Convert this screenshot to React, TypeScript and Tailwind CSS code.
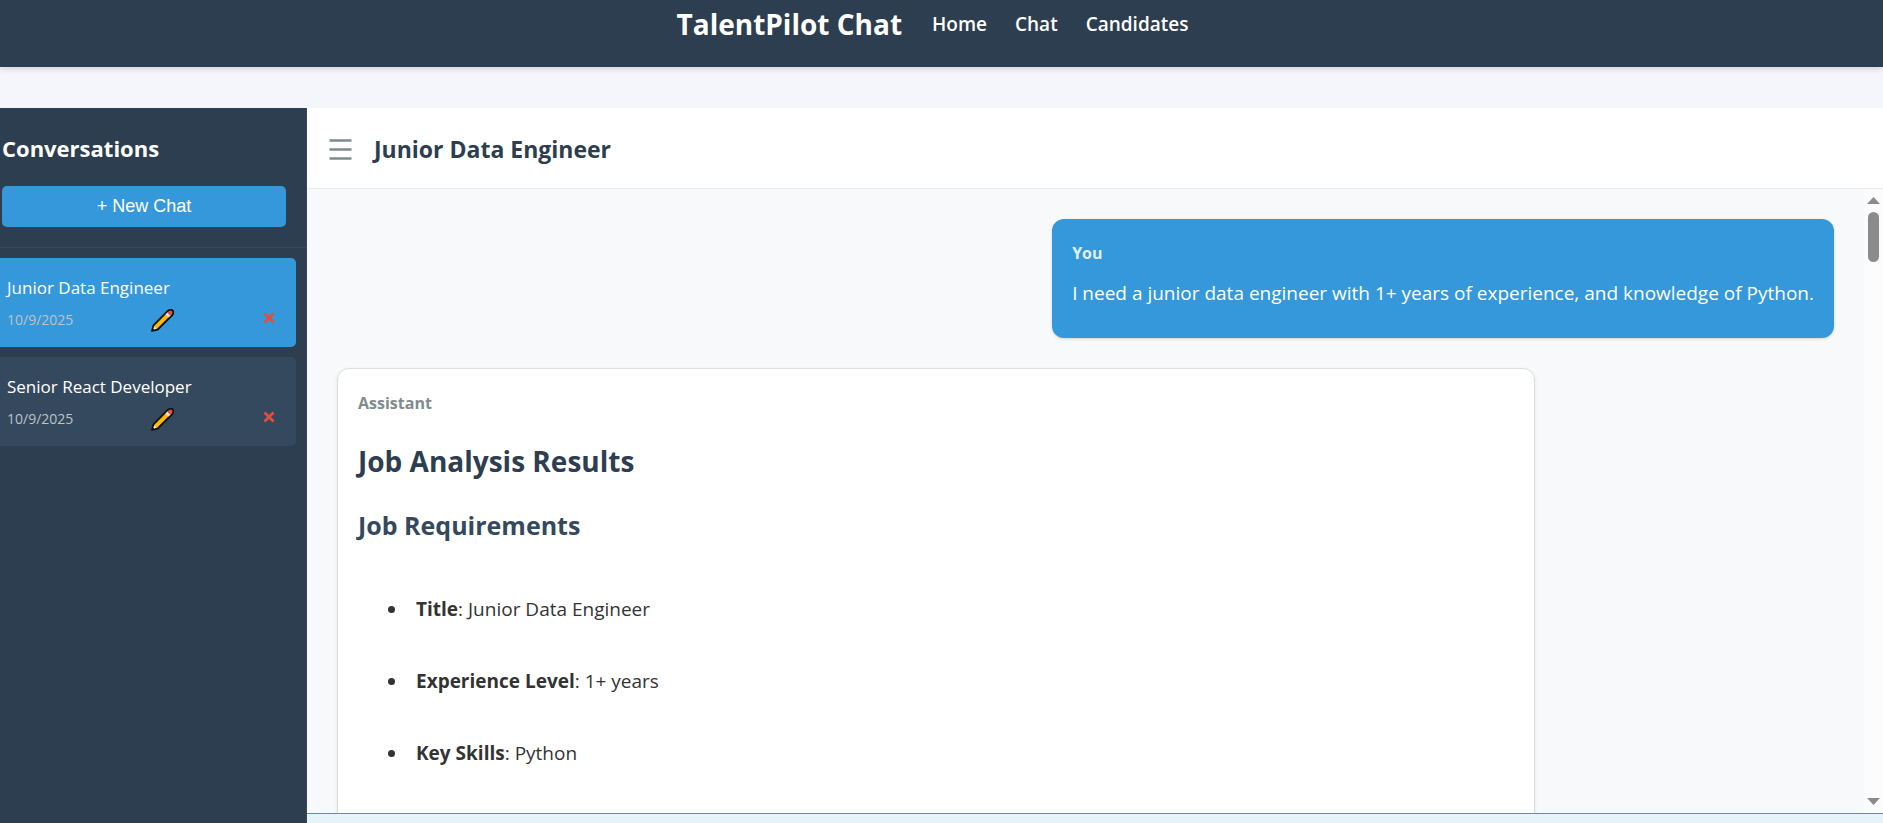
import React, { useState } from 'react';

interface Conversation {
  id: number;
  title: string;
  date: string;
}

interface Requirement {
  label: string;
  value: string;
}

const conversations: Conversation[] = [
  { id: 1, title: 'Junior Data Engineer', date: '10/9/2025' },
  { id: 2, title: 'Senior React Developer', date: '10/9/2025' }
];

const requirements: Requirement[] = [
  { label: 'Title', value: 'Junior Data Engineer' },
  { label: 'Experience Level', value: '1+ years' },
  { label: 'Key Skills', value: 'Python' }
];

const navLinks = ['Home', 'Chat', 'Candidates'];

const PencilIcon = () => (
  <svg viewBox="0 0 22 22" className="h-[23px] w-[23px]" aria-hidden="true">
    <path d="M1 21 L2.4 15.6 L15.9 2.1 Q18.4 -0.2 20.7 1.4 Q22.2 3.8 19.9 6.2 L6.4 19.6 Z" fill="#ffb900" stroke="#111" strokeWidth="1.8" strokeLinejoin="round" />
    <path d="M13.9 5.2 L15.8 3.3 L18.7 6.2 L16.8 8.1 Z" fill="#e5e5e5" />
    <path d="M15.6 3.6 Q18.3 0.9 20.1 2 Q21 3.7 18.4 6.4 Z" fill="#e74856" />
    <path d="M3 16.4 L5.6 19 L2.1 19.9 Z" fill="#f0dfd3" />
    <path d="M1 21 L1.7 18.4 L3.6 20.3 Z" fill="#111" />
  </svg>
);

const CrossIcon = () => (
  <svg viewBox="0 0 12 12" className="h-3 w-3" aria-hidden="true">
    <path d="M1.5 1.5 L10.5 10.5 M10.5 1.5 L1.5 10.5" stroke="#e74c3c" strokeWidth="2.6" />
  </svg>
);

const MenuIcon = () => (
  <svg viewBox="0 0 27 27" className="h-[27px] w-[27px]" aria-hidden="true">
    <path d="M2.5 4.5 H24.5 M2.5 13.5 H24.5 M2.5 22.5 H24.5" stroke="#7f8c8d" strokeWidth="2.6" />
  </svg>
);

const Header = () => (
  <header className="relative z-10 h-[67px] shrink-0 bg-[#2c3e50] pr-[18px] text-white shadow-[0_2px_6px_rgba(0,0,0,0.15)]">
    <div className="flex h-12 items-center justify-center gap-[30px]">
      <h1 className="text-[28px] leading-10 font-bold">TalentPilot Chat</h1>
      <nav className="flex items-center gap-7">
        {navLinks.map((link) => (
          <a key={link} href="#" className="text-[19px] font-semibold">
            {link}
          </a>
        ))}
      </nav>
    </div>
  </header>
);

interface SidebarProps {
  activeId: number;
  onSelect: (id: number) => void;
}

const Sidebar: React.FC<SidebarProps> = ({ activeId, onSelect }) => (
  <aside className="-ml-[18px] w-[325px] shrink-0 border-r border-[#34495e] bg-[#2c3e50] text-white">
    <div className="border-b border-[#34495e] p-5">
      <h2 className="mb-[18px] text-[22px] leading-10 font-bold">Conversations</h2>
      <button className="block h-[41px] w-full rounded-[5px] bg-[#3498db] pb-0.5 font-['Liberation_Sans',sans-serif] text-lg">
        + New Chat
      </button>
    </div>
    <ul className="flex flex-col gap-2.5 p-2.5">
      {conversations.map((c) => (
        <li key={c.id} className={`rounded-[5px] px-[15px] pt-[15px] pb-3 ${c.id === activeId ? 'bg-[#3498db]' : 'bg-[#34495e]'}`}>
          <button onClick={() => onSelect(c.id)} className="block w-full text-left text-[17px] leading-[30px]">
            {c.title}
          </button>
          <div className="flex h-8 items-center justify-between">
            <span className="pt-0.5 text-sm text-[#bdc3c7]">{c.date}</span>
            <button aria-label="Edit conversation" className="pt-0.5 pr-1.5">
              <PencilIcon />
            </button>
            <button aria-label="Delete conversation" className="flex w-6 justify-center pb-0.5">
              <CrossIcon />
            </button>
          </div>
        </li>
      ))}
    </ul>
  </aside>
);

const Scrollbar = () => (
  <div className="flex w-[19px] shrink-0 flex-col items-center bg-[#fcfcfc] py-2" aria-hidden="true">
    <svg viewBox="0 0 13 7" className="h-[7px] w-[13px]">
      <path d="M6.5 0 L13 7 H0 Z" fill="#8b8b8b" />
    </svg>
    <div className="mt-2 h-[50px] w-[11px] rounded-full bg-[#8b8b8b]" />
    <svg viewBox="0 0 13 7" className="mt-auto h-[7px] w-[13px]">
      <path d="M0 0 H13 L6.5 7 Z" fill="#8b8b8b" />
    </svg>
  </div>
);

const Messages = () => (
  <div className="flex min-h-0 flex-1 bg-[#f8f9fb]">
    <div className="flex min-w-0 flex-1 flex-col gap-[30px] overflow-hidden p-[30px]">
      <div className="max-w-4/5 shrink-0 self-end rounded-xl bg-[#3498db] p-5 text-white shadow-[0_1px_3px_rgba(0,0,0,0.15)]">
        <div className="mb-2.5 text-base leading-7 font-bold text-[#e1effa]">You</div>
        <p className="mb-[9px] text-[19px] leading-8">
          I need a junior data engineer with 1+ years of experience, and knowledge of Python.
        </p>
      </div>
      <div className="w-4/5 shrink-0 self-start rounded-xl border border-[#dcdfe0] bg-white p-5 text-[#333] shadow-[0_1px_3px_rgba(0,0,0,0.1)]">
        <div className="text-base leading-7 font-bold text-[#7f8c8d]">Assistant</div>
        <h1 className="mt-6 text-[28px] leading-10 font-bold text-[#2c3e50]">Job Analysis Results</h1>
        <h2 className="mt-6 text-[25px] leading-10 font-bold text-[#34495e]">Job Requirements</h2>
        <ul className="my-12 flex list-disc flex-col gap-10 pl-[50px] text-[19px] leading-8">
          {requirements.map((r) => (
            <li key={r.label} className="pl-2">
              <strong className="font-bold">{r.label}</strong>: {r.value}
            </li>
          ))}
        </ul>
      </div>
    </div>
    <Scrollbar />
  </div>
);

export default function App() {
  const [activeId, setActiveId] = useState(1);
  const active = conversations.find((c) => c.id === activeId);

  return (
    <div className="flex h-screen flex-col overflow-hidden bg-[#f4f6fb] font-['Open_Sans','Noto_Sans',sans-serif]">
      <Header />
      <div className="mt-[41px] flex min-h-0 flex-1">
        <Sidebar activeId={activeId} onSelect={setActiveId} />
        <main className="flex min-w-0 flex-1 flex-col bg-white">
          <div className="flex h-[81px] shrink-0 items-center gap-5 border-b border-[#ecedee] px-5 pt-0.5">
            <button aria-label="Toggle sidebar">
              <MenuIcon />
            </button>
            <h2 className="text-[23px] font-bold text-[#2c3e50]">{active?.title}</h2>
          </div>
          <Messages />
          <div className="h-2.5 shrink-0 border-t border-[#3498db] bg-[#e6f3fb]" />
        </main>
      </div>
    </div>
  );
}
